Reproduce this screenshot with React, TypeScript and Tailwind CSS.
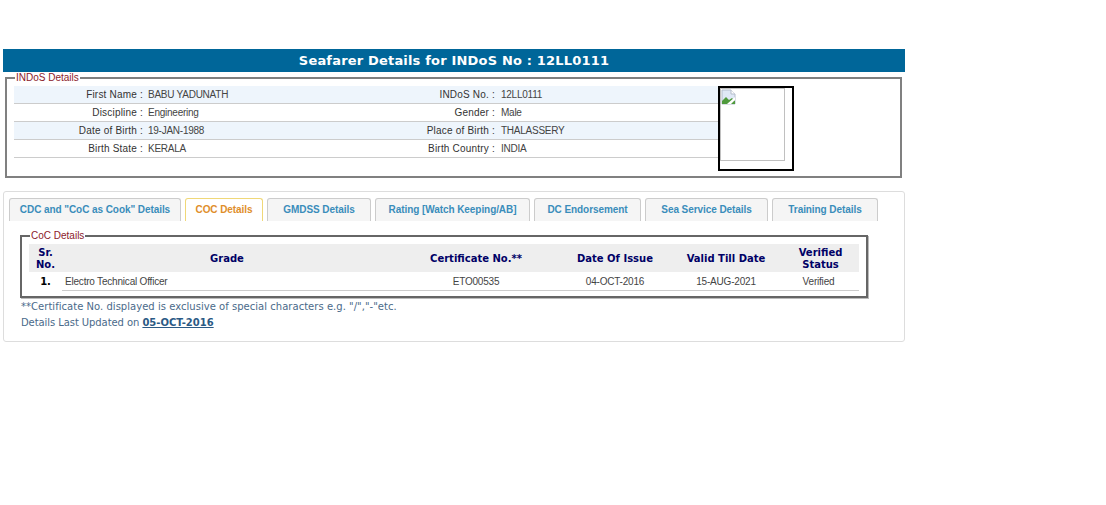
const BODY_FONT = "font-['Liberation_Sans',Arial,sans-serif]"
const HEAD_FONT = "font-['DejaVu_Sans',Verdana,sans-serif]"

const indosRows = [
  ['First Name', 'BABU YADUNATH', 'INDoS No.', '12LL0111'],
  ['Discipline', 'Engineering', 'Gender', 'Male'],
  ['Date of Birth', '19-JAN-1988', 'Place of Birth', 'THALASSERY'],
  ['Birth State', 'KERALA', 'Birth Country', 'INDIA'],
]

const tabs = [
  { label: 'CDC and "CoC as Cook" Details', width: 'w-[172px]' },
  { label: 'COC Details', width: 'w-[78px]', active: true },
  { label: 'GMDSS Details', width: 'w-[104px]' },
  { label: 'Rating [Watch Keeping/AB]', width: 'w-[155px]' },
  { label: 'DC Endorsement', width: 'w-[107px]' },
  { label: 'Sea Service Details', width: 'w-[123px]' },
  { label: 'Training Details', width: 'w-[106px]' },
]

function BrokenImage() {
  return (
    <svg className="w-4 h-4" viewBox="0 0 16 16">
      <path d="M1 1h9l4 4v10H1z" fill="#dfe8f6" stroke="#b4bccb" />
      <path d="M10 1v4h4" fill="#fff" stroke="#b4bccb" />
      <path d="M1 15v-3l4-4 3 3 3-2 3 3v3z" fill="#4f9a3c" />
      <path d="M6 15l8-7v3l-4 4z" fill="#fff" />
    </svg>
  )
}

function Legend({ children }: { children: string }) {
  return <legend className="ml-[8px] px-[1px] text-[10px] leading-[10px] text-[#8b1a2b]">{children}</legend>
}

export default function App() {
  return (
    <div className={`${BODY_FONT} w-[1106px] h-[505px] bg-white pt-[49px] pl-[3px] overflow-hidden`}>
      <div className="w-[902px]">
        <h1 className={`${HEAD_FONT} h-[23px] bg-[#006699] text-white text-[13px] tracking-[0.18px] font-bold leading-[23px] text-center`}>
          Seafarer Details for INDoS No : 12LL0111
        </h1>

        {/* INDoS details */}
        <fieldset className="mt-[1px] ml-[2px] w-[897px] h-[105px] border-2 border-[#808080]">
          <Legend>INDoS Details</Legend>
          <div className="flex pl-[7px] pt-[3px]">
            <div className="w-[704px]">
              {indosRows.map((row, i) => (
                <div
                  key={row[0]}
                  className={`grid grid-cols-[129px_218px_134px_1fr] h-[18px] border-b border-[#cccccc] text-[10px] leading-[17px] ${i % 2 === 0 ? 'bg-[#eef5fc]' : 'bg-white'}`}
                >
                  <span className="text-right tracking-[0.2px] text-[#333]">{row[0]} :</span>
                  <span className="pl-[5px] tracking-[-0.25px] text-[#444]">{row[1]}</span>
                  <span className="text-right tracking-[0.2px] text-[#333]">{row[2]} :</span>
                  <span className="pl-[6px] tracking-[-0.25px] text-[#444]">{row[3]}</span>
                </div>
              ))}
            </div>
            <div className="w-[76px] h-[85px] border-[2px] border-black">
              <div className="w-[65px] h-[73px] border border-[#c0c0c0]">
                <BrokenImage />
              </div>
            </div>
          </div>
        </fieldset>

        {/* Tabbed panel */}
        <div className="mt-[13px] h-[151px] border border-[#dddddd] rounded-[3px] pt-[6px] pl-[5px]">
          <div className="flex gap-[4px]">
            {tabs.map(tab => (
              <div
                key={tab.label}
                className={[
                  'h-[23px] border border-b-0 rounded-t-[3px] text-center text-[10px] tracking-[-0.07px] font-bold leading-[22px]',
                  tab.width,
                  tab.active
                    ? 'bg-white border-[#f0d878] text-[#e08e2b]'
                    : 'bg-[#f5f5f5] border-[#cccccc] text-[#3a8dbb]',
                ].join(' ')}
              >
                {tab.label}
              </div>
            ))}
          </div>

          {/* CoC details */}
          <fieldset className="mt-[10px] ml-[11px] w-[848px] h-[67px] border-2 border-[#666666] shadow-[1px_1px_0_#bbb]">
            <Legend>CoC Details</Legend>
            <table className="ml-[7px] mt-[3px] w-[830px] table-fixed border-collapse">
              <thead>
                <tr className={`${HEAD_FONT} h-[28px] bg-[#eeeeee] text-[10px] font-bold leading-[12px] text-[#000066]`}>
                  <th className="w-[33px] pt-[1px]">Sr.<br />No.</th>
                  <th className="w-[330px] pt-[1px]">Grade</th>
                  <th className="w-[168px] pt-[1px]">Certificate No.**</th>
                  <th className="w-[110px] pt-[1px]">Date Of Issue</th>
                  <th className="w-[112px] pt-[1px]">Valid Till Date</th>
                  <th className="pt-[1px]">Verified<br />Status</th>
                </tr>
              </thead>
              <tbody>
                <tr className="h-[18px] text-[10px] tracking-[-0.2px] text-[#444]">
                  <td className={`${HEAD_FONT} text-center font-bold text-black`}>1.</td>
                  <td className="border-b border-[#cccccc] pl-[3px] pt-[1px]">Electro Technical Officer</td>
                  <td className="border-b border-[#cccccc] pt-[1px] text-center">ETO00535</td>
                  <td className="border-b border-[#cccccc] pt-[1px] text-center">04-OCT-2016</td>
                  <td className="border-b border-[#cccccc] pt-[1px] text-center">15-AUG-2021</td>
                  <td className="border-b border-[#cccccc] pt-[1px] text-center pr-[4px]">Verified</td>
                </tr>
              </tbody>
            </table>
          </fieldset>

          <p className={`${HEAD_FONT} mt-[1px] ml-[12px] text-[10px] tracking-[0.03px] leading-[16px] text-[#4a6a8a]`}>
            **Certificate No. displayed is exclusive of special characters e.g. "/","-"etc.
          </p>
          <p className={`${HEAD_FONT} ml-[12px] text-[10px] leading-[16px] text-[#4a6a8a]`}>
            <span className="tracking-[-0.08px]">Details Last Updated on</span> <span className="font-bold underline text-[#2b5a85]">05-OCT-2016</span>
          </p>
        </div>
      </div>
    </div>
  )
}
